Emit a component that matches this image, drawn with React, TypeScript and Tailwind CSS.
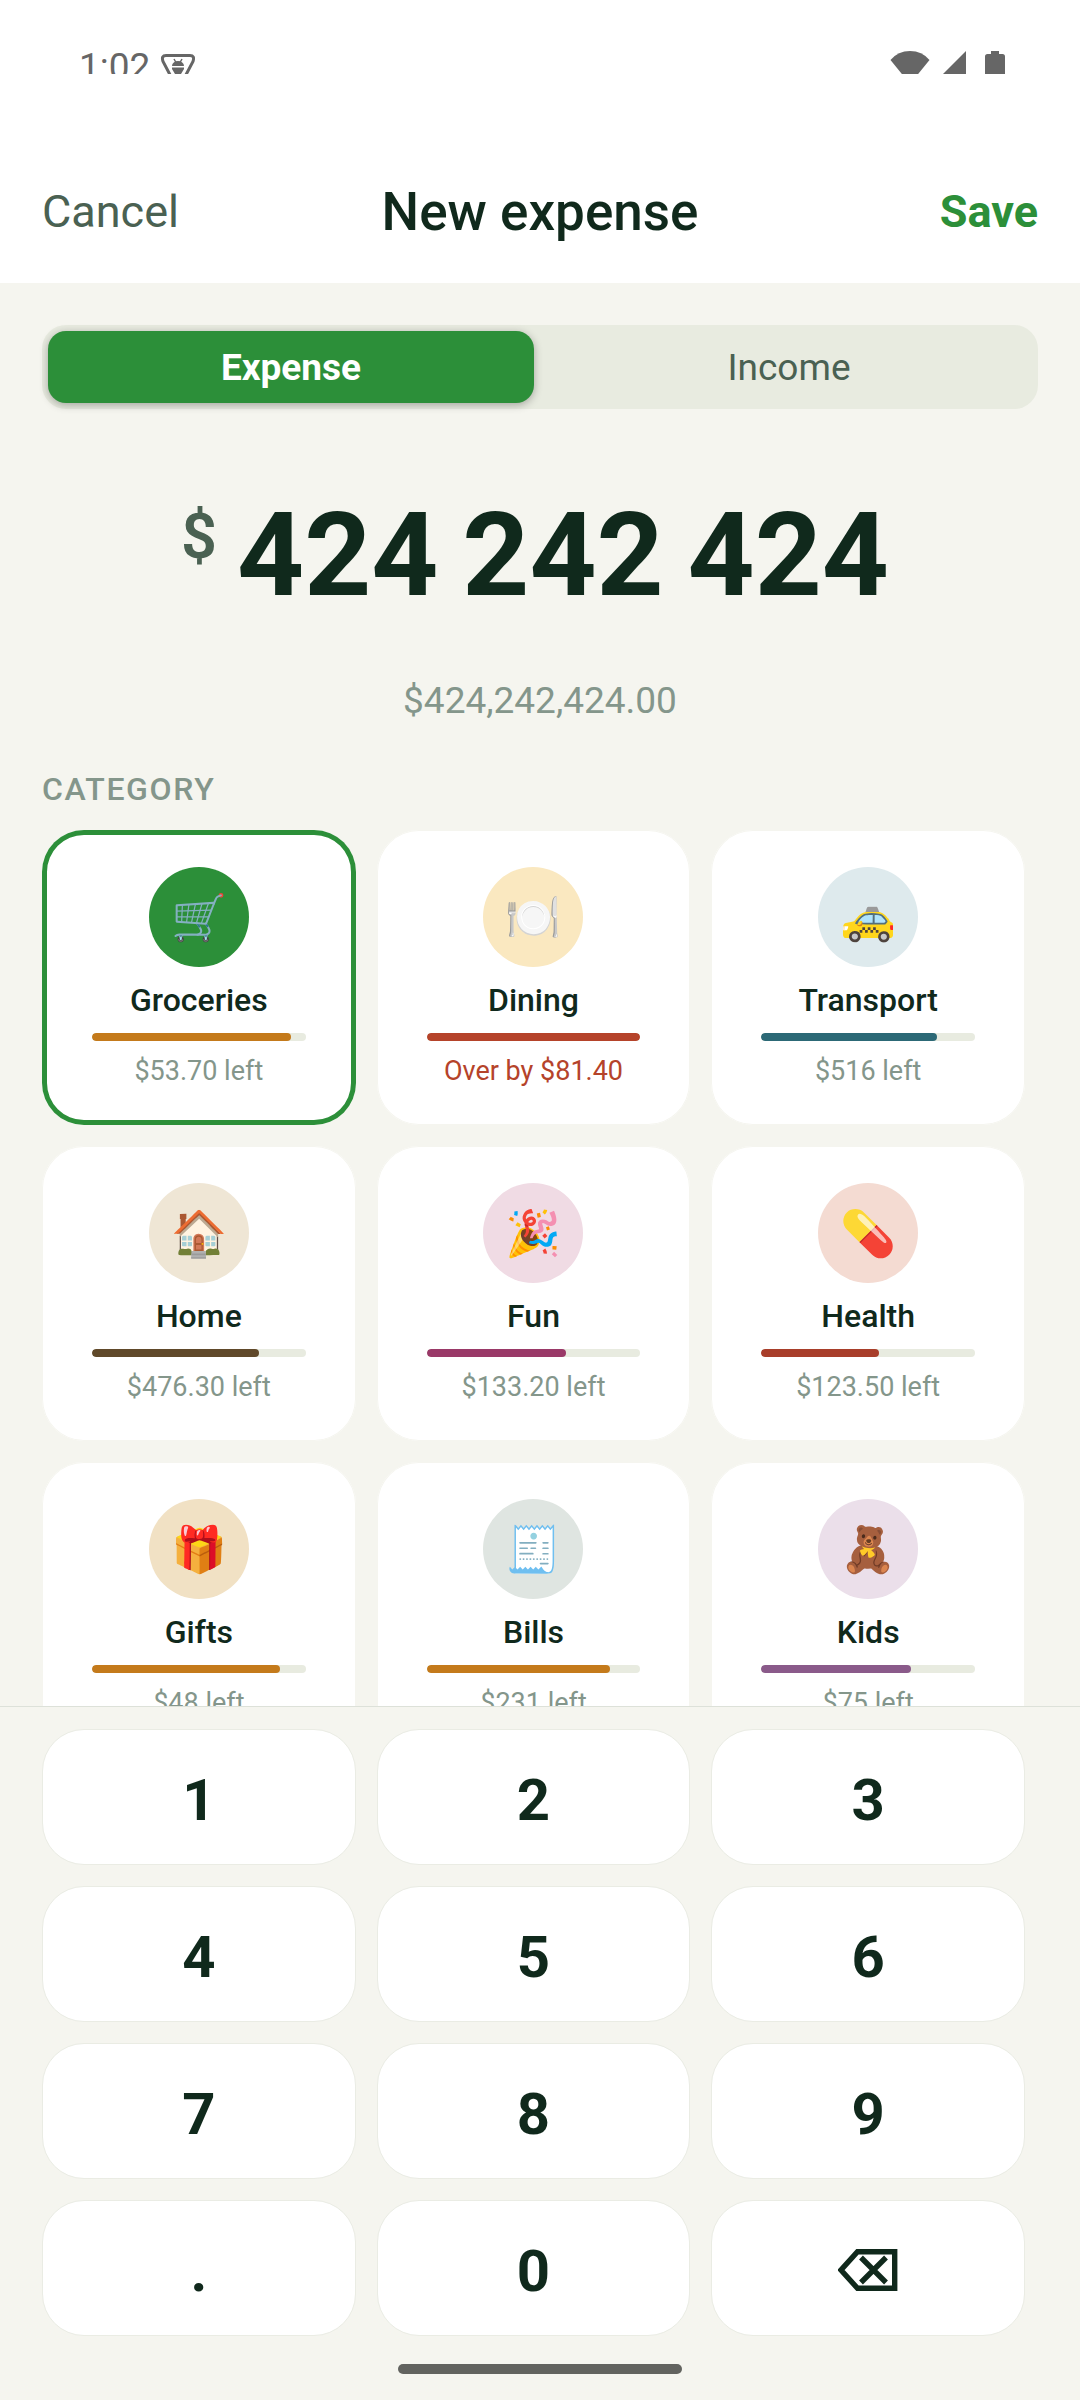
import { useState } from "react";
import { clsx } from "clsx";

const categories = [
  { name: "Groceries", icon: "🛒", tint: "bg-[#2c8f39]", bar: "bg-[#c47a1b]", used: 93, note: "$53.70 left" },
  { name: "Dining", icon: "🍽️", tint: "bg-[#fae8c0]", bar: "bg-[#b5432a]", used: 100, note: "Over by $81.40", over: true },
  { name: "Transport", icon: "🚕", tint: "bg-[#deeaed]", bar: "bg-[#2c6976]", used: 82, note: "$516 left" },
  { name: "Home", icon: "🏠", tint: "bg-[#efe6d5]", bar: "bg-[#60492a]", used: 78, note: "$476.30 left" },
  { name: "Fun", icon: "🎉", tint: "bg-[#f0dbe4]", bar: "bg-[#9a3968]", used: 65, note: "$133.20 left" },
  { name: "Health", icon: "💊", tint: "bg-[#f4dbd2]", bar: "bg-[#a83e2a]", used: 55, note: "$123.50 left" },
  { name: "Gifts", icon: "🎁", tint: "bg-[#f1e1c4]", bar: "bg-[#c47a1b]", used: 88, note: "$48 left" },
  { name: "Bills", icon: "🧾", tint: "bg-[#dfe5e1]", bar: "bg-[#c47a1b]", used: 86, note: "$231 left" },
  { name: "Kids", icon: "🧸", tint: "bg-[#ebdfea]", bar: "bg-[#8a5a8a]", used: 70, note: "$75 left" },
];

const keys = ["1", "2", "3", "4", "5", "6", "7", "8", "9", ".", "0", "del"];

function StatusBar() {
  return (
    <div className="flex h-[74px] items-start justify-between overflow-hidden bg-white pt-[45px] pr-[75px] pl-[79px] text-[#666666]">
      <div className="flex items-start gap-[10px]">
        <span className="text-[37px] leading-[44px]">1:02</span>
        <svg width="36" height="40" viewBox="0 0 36 40" fill="none">
          <path
            d="M6 10.500h24q5 0 3 6l-9 17q-6 6-12 0L3 16.500q-2-6 3-6z"
            stroke="currentColor"
            strokeWidth="3"
          />
          <path d="M12 21a6 5 0 0 1 12 0zM12 22.500h12v1.500l-3 5h-6l-3-5z" fill="currentColor" />
          <path d="M14 14l2 3.500M22 14l-2 3.500" stroke="currentColor" strokeWidth="1.500" />
        </svg>
      </div>
      <div className="flex items-start">
        <svg width="115" height="40" viewBox="0 0 115 40" fill="currentColor">
          <path d="M0.500 15Q8 6 20 6T39.500 15L20 39z" />
          <path d="M76 6v30H46z" />
          <path d="M101 6h8v3h3.500q2.500 0 2.500 2.500V40H95V11.500Q95 9 97.500 9h3.500z" />
        </svg>
      </div>
    </div>
  );
}

function BackspaceIcon() {
  return (
    <svg width="60" height="44" viewBox="0 0 60 44" fill="none" stroke="#10291c">
      <path d="M19.500 2.700h37.200v36.600H19.500L3 21z" strokeWidth="5.400" />
      <path d="M23 8.500l25 25M48 8.500l-25 25" strokeWidth="5.400" />
    </svg>
  );
}

function CategoryCard({ item, selected, onSelect }: any) {
  return (
    <button
      type="button"
      aria-pressed={selected}
      onClick={onSelect}
      className={clsx(
        "flex flex-col items-center gap-[14px] rounded-[42px] bg-white px-[50px] pt-[37px] pb-[38px] ring-inset",
        selected ? "ring-[5px] ring-[#2c8f39]" : "ring-1 ring-[#f5f5ef]"
      )}
    >
      <span
        className={clsx(
          "flex size-[100px] items-center justify-center rounded-full text-[45px] leading-none",
          item.tint
        )}
      >
        {item.icon}
      </span>
      <span className="text-[32px] leading-[38px] font-medium text-[#10291c]">{item.name}</span>
      <span className="block h-2 w-full overflow-hidden rounded-full bg-[#e8ebe0]">
        <span
          className={clsx("block h-full rounded-full", item.bar)}
          style={{ width: `${item.used}%` }}
        />
      </span>
      <span
        className={clsx(
          "text-[27px] leading-[32px] whitespace-nowrap",
          item.over ? "text-[#b5432a]" : "text-[#84968b]"
        )}
      >
        {item.note}
      </span>
    </button>
  );
}

export default function App() {
  const [type, setType] = useState("Expense");
  const [category, setCategory] = useState("Groceries");
  const [amount, setAmount] = useState("424242424");

  const press = (key: string) => {
    if (key === "del") {
      setAmount(amount.slice(0, -1));
      return;
    }
    if (key === "." && amount.includes(".")) return;
    setAmount(amount + key);
  };

  const [whole, cents] = amount.split(".");
  const grouped = whole.replace(/\B(?=(\d{3})+$)/g, "\u2009") + (cents !== undefined ? "." + cents : "");
  const formatted = Number(amount || 0).toLocaleString("en-US", {
    style: "currency",
    currency: "USD",
  });

  return (
    <div className="flex h-screen flex-col bg-[#f5f5ef] font-[Roboto,sans-serif]">
      <StatusBar />
      <header className="grid grid-cols-[1fr_auto_1fr] items-center bg-white px-[42px] pt-[107px] pb-10">
        <button
          type="button"
          className="justify-self-start text-[45px] leading-[54px] text-[#4a6152]"
        >
          Cancel
        </button>
        <h1 className="text-[53px] leading-[62px] font-medium text-[#10291c]">New expense</h1>
        <button
          type="button"
          className="justify-self-end text-[45px] leading-[54px] font-bold text-[#2c8f39]"
        >
          Save
        </button>
      </header>

      <main className="min-h-0 flex-1 overflow-y-auto pt-[42px] [scrollbar-width:none]">
        <div className="mx-[42px] grid grid-cols-2 gap-3 rounded-3xl bg-[#e8ebe0] p-[6px]">
          {["Expense", "Income"].map((t) => (
            <button
              key={t}
              type="button"
              aria-pressed={type === t}
              onClick={() => setType(t)}
              className={clsx(
                "h-[72px] rounded-[18px] pt-[2px] text-[37px] leading-[44px]",
                type === t
                  ? "bg-[#2c8f39] font-bold text-white shadow-[0_2px_8px_rgba(0,0,0,0.3)]"
                  : "text-[#4a6152]"
              )}
            >
              {t}
            </button>
          ))}
        </div>

        <div className="mt-[76px] flex items-start justify-center">
          <span className="mt-[14px] mr-5 text-[63px] leading-[76px] font-semibold text-[#4a6152]">
            $
          </span>
          <output className="mr-[10px] text-[117px] leading-[140px] font-bold text-[#10291c]">
            {grouped}
          </output>
        </div>
        <p className="mt-[54px] text-center text-[37px] leading-[44px] text-[#84968b]">
          {formatted}
        </p>

        <h2 className="mt-[47px] px-[42px] text-[32px] leading-[38px] font-medium tracking-wider text-[#84968b]">
          CATEGORY
        </h2>
        <div className="mt-[22px] grid grid-cols-3 gap-[21px] pr-[55px] pl-[42px]">
          {categories.map((item) => (
            <CategoryCard
              key={item.name}
              item={item}
              selected={category === item.name}
              onSelect={() => setCategory(item.name)}
            />
          ))}
        </div>
      </main>

      <div className="grid grid-cols-3 gap-[21px] border-t border-[#dde1d9] pt-[22px] pr-[55px] pl-[42px]">
        {keys.map((key) => (
          <button
            key={key}
            type="button"
            aria-label={key === "del" ? "Delete" : undefined}
            onClick={() => press(key)}
            className="flex h-[136px] items-center justify-center rounded-[42px] border border-[#eaece4] bg-white pt-[6px] text-[58px] leading-[68px] font-bold text-[#10291c]"
          >
            {key === "del" ? <BackspaceIcon /> : key}
          </button>
        ))}
      </div>
      <div className="flex justify-center pt-7 pb-[26px]">
        <div className="h-[10px] w-[284px] rounded-full bg-[#62635f]" />
      </div>
    </div>
  );
}
